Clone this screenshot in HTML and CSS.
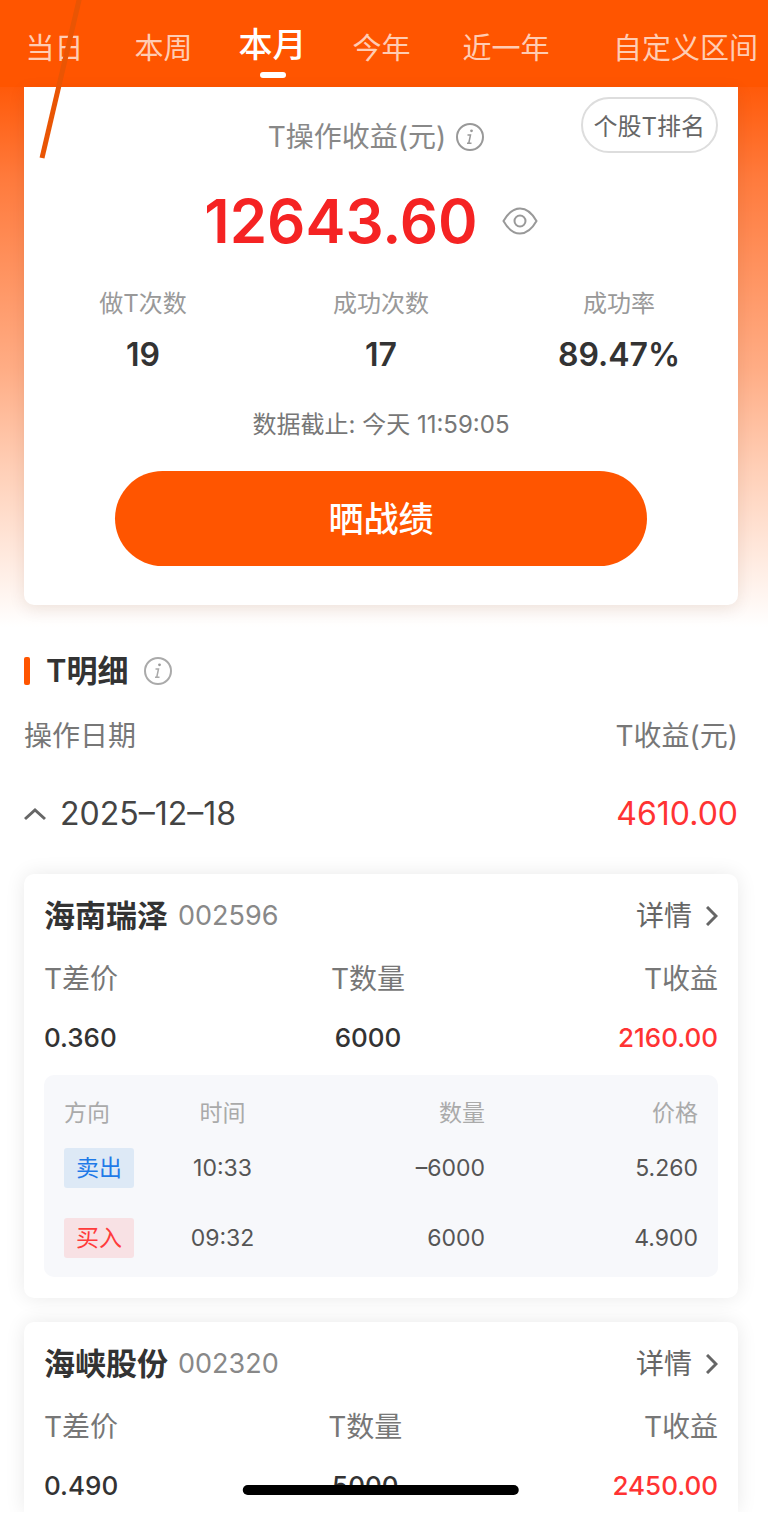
FILE: index.html
```html
<!DOCTYPE html>
<html lang="zh-CN">
  <head>
    <meta charset="UTF-8">
    <meta name="viewport" content="width=device-width, initial-scale=1.0">
    <title>T操作收益</title>
    <link rel="stylesheet" href="styles.css">
  </head>
  <body>
    <!-- Period tabs -->
    <nav class="tabs">
      <a href="#" class="tab">当日</a>
      <a href="#" class="tab">本周</a>
      <a href="#" class="tab active">本月</a>
      <a href="#" class="tab">今年</a>
      <a href="#" class="tab">近一年</a>
      <a href="#" class="tab custom">自定义区间</a>
    </nav>
    <svg class="slash" width="90" height="160" viewBox="0 0 90 160" aria-hidden="true">
      <path d="M80 -4 L42 158" fill="none" stroke="#e95504" stroke-width="5"/>
    </svg>

    <!-- Profit summary -->
    <section class="hero">
      <div class="summary">
        <button class="rank" type="button">个股T排名</button>
        <div class="summary-title">
          <span>T操作收益(元)</span>
          <svg class="info" viewBox="0 0 28 28" aria-hidden="true">
            <circle cx="14" cy="14" r="13"/>
            <path class="stem" d="M11.5 12 H14.5 L12.8 20 M11 20.3 H15.5"/>
            <circle class="dot" cx="15.5" cy="7.8" r="1.4"/>
          </svg>
        </div>
        <div class="amount">
          <span>12643.60</span>
          <svg class="eye" viewBox="0 0 36 28" aria-hidden="true">
            <path d="M1.5 14 C6 6 11 1.5 18 1.5 S30 6 34.5 14 C30 22 25 26.5 18 26.5 S6 22 1.5 14 Z"/>
            <circle cx="18" cy="14" r="5.5"/>
          </svg>
        </div>
        <div class="stats">
          <div class="stat"><span>做T次数</span><strong>19</strong></div>
          <div class="stat"><span>成功次数</span><strong>17</strong></div>
          <div class="stat"><span>成功率</span><strong>89.47%</strong></div>
        </div>
        <p class="deadline">数据截止: 今天 11:59:05</p>
        <button class="share" type="button">晒战绩</button>
      </div>
    </section>

    <!-- Trade details -->
    <main class="details">
      <h2 class="section-title">
        T明细
        <svg class="info light" viewBox="0 0 28 28" aria-hidden="true">
          <circle cx="14" cy="14" r="13"/>
          <path class="stem" d="M11.5 12 H14.5 L12.8 20 M11 20.3 H15.5"/>
          <circle class="dot" cx="15.5" cy="7.8" r="1.4"/>
        </svg>
      </h2>
      <div class="list-head"><span>操作日期</span><span>T收益(元)</span></div>
      <div class="day">
        <button class="toggle" type="button">
          <svg width="22" height="14" viewBox="0 0 22 14" aria-hidden="true"><path d="M1 12 L11 3 L21 12"/></svg>
          2025–12–18
        </button>
        <span class="day-profit">4610.00</span>
      </div>

      <article class="card">
        <header class="card-head">
          <h3>海南瑞泽</h3>
          <span class="code">002596</span>
          <a href="#" class="more">详情
            <svg width="12" height="20" viewBox="0 0 12 20" aria-hidden="true"><path d="M1 1 L10 10 L1 19"/></svg>
          </a>
        </header>
        <div class="figures">
          <div class="figure"><span>T差价</span><b>0.360</b></div>
          <div class="figure middle"><span>T数量</span><b>6000</b></div>
          <div class="figure right"><span>T收益</span><b class="up">2160.00</b></div>
        </div>
        <div class="trades">
          <table>
            <thead>
              <tr><th>方向</th><th>时间</th><th>数量</th><th>价格</th></tr>
            </thead>
            <tbody>
              <tr><td><span class="tag sell">卖出</span></td><td>10:33</td><td>–6000</td><td>5.260</td></tr>
              <tr><td><span class="tag buy">买入</span></td><td>09:32</td><td>6000</td><td>4.900</td></tr>
            </tbody>
          </table>
        </div>
      </article>

      <article class="card last">
        <header class="card-head">
          <h3>海峡股份</h3>
          <span class="code">002320</span>
          <a href="#" class="more">详情
            <svg width="12" height="20" viewBox="0 0 12 20" aria-hidden="true"><path d="M1 1 L10 10 L1 19"/></svg>
          </a>
        </header>
        <div class="figures">
          <div class="figure"><span>T差价</span><b>0.490</b></div>
          <div class="figure middle"><span>T数量</span><b>5000</b></div>
          <div class="figure right"><span>T收益</span><b class="up">2450.00</b></div>
        </div>
      </article>
    </main>

    <div class="home-bar"></div>
  </body>
</html>
```

FILE: styles.css
```css
/* General Styles */
* {
  box-sizing: border-box;
}

body {
  margin: 0;
  background: #fff;
  color: #333;
  font-family: Inter, "Noto Sans CJK SC", sans-serif;
  font-size: 28px;
  line-height: 40px;
  overflow-x: hidden;
}

a {
  color: inherit;
  text-decoration: none;
}

button {
  font-family: inherit;
  border: none;
  background: none;
  padding: 0;
  cursor: pointer;
}

h2,
h3,
p {
  margin: 0;
}

svg {
  fill: none;
  flex-shrink: 0;
}

/* Tabs */
.tabs {
  display: grid;
  grid-template-columns: repeat(4, 109fr) 140fr 192fr;
  height: 87px;
  padding-top: 21px;
  background: #ff5500;
  color: #ffccb3;
  font-size: 29px;
  line-height: 56px;
  text-align: center;
  white-space: nowrap;
}

.tab.active {
  color: #fff;
  font-size: 34px;
  font-weight: 500;
  line-height: 48px;
}

.tab.active::after {
  content: "";
  display: block;
  width: 26px;
  height: 6px;
  margin: 3px auto 0;
  border-radius: 3px;
  background: #fff;
}

.tab.custom {
  padding-right: 10px;
  text-align: right;
}

.slash {
  position: absolute;
  top: 0;
  left: 0;
  z-index: 2;
  pointer-events: none;
}

/* Summary */
.hero {
  padding: 0 30px 32px 24px;
  background: linear-gradient(#ff5a0a, #ff7a3c 90px, #ffac84 280px, #ffd0b8 385px, #fff 540px);
}

.summary {
  position: relative;
  padding: 30px 0 39px;
  border-radius: 0 0 10px 10px;
  background: #fff;
  box-shadow: 0 4px 16px rgba(80, 40, 0, 0.1);
  text-align: center;
}

.rank {
  position: absolute;
  top: 10px;
  right: 20px;
  height: 56px;
  padding: 0 11px 2px;
  border: 2px solid #ddd;
  border-radius: 28px;
  color: #666;
  font-size: 24px;
}

.summary-title {
  display: flex;
  align-items: center;
  justify-content: center;
  gap: 10px;
  padding-right: 10px;
  color: #888;
}

.info {
  width: 28px;
  height: 28px;
  stroke: #999;
  stroke-width: 2;
}

.info.light {
  stroke: #aaa;
}

.info .stem {
  stroke-width: 1.5;
}

.info .dot {
  fill: #999;
  stroke: none;
}

.amount {
  display: flex;
  align-items: center;
  justify-content: center;
  gap: 24px;
  margin-top: 24px;
  padding-right: 20px;
  color: #f52323;
  font-size: 60px;
  font-weight: 600;
  line-height: 80px;
}

.eye {
  width: 36px;
  height: 28px;
  stroke: #999;
  stroke-width: 2;
}

.stats {
  display: grid;
  grid-template-columns: repeat(3, 1fr);
  margin-top: 23px;
}

.stat span {
  display: block;
  color: #999;
  font-size: 24px;
}

.stat strong {
  display: block;
  margin-top: 11px;
  font-size: 32px;
  font-weight: 600;
}

.deadline {
  margin-top: 30px;
  color: #777;
  font-size: 24px;
}

.share {
  display: block;
  width: calc(100% - 182px);
  height: 95px;
  margin: 26px auto 0;
  padding-bottom: 4px;
  border-radius: 48px;
  background: #ff5500;
  color: #fff;
  font-size: 35px;
  font-weight: 500;
}

/* Details */
.details {
  padding: 0 30px 0 24px;
}

.section-title {
  display: flex;
  align-items: center;
  gap: 16px;
  margin-top: 14px;
  font-size: 31px;
  font-weight: 600;
}

.section-title::before {
  content: "";
  width: 6px;
  height: 28px;
  border-radius: 2px;
  background: #ff5500;
}

.list-head,
.day {
  display: flex;
  align-items: center;
  justify-content: space-between;
}

.list-head {
  margin-top: 25px;
  color: #777;
}

.day {
  margin: 38px 0 40px;
  font-size: 32px;
}

.toggle {
  display: flex;
  align-items: center;
  gap: 14px;
  color: #444;
  font-size: 32px;
  line-height: 40px;
}

.toggle svg {
  stroke: #666;
  stroke-width: 3;
}

.day-profit,
.up {
  color: #ff3333;
}

/* Stock cards */
.card {
  padding: 22px 20px 21px;
  border-radius: 10px;
  background: #fff;
  box-shadow: 0 0 20px rgba(0, 0, 0, 0.09);
}

.card + .card {
  margin-top: 24px;
}

.card.last {
  padding-bottom: 6px;
  border-radius: 10px 10px 0 0;
}

.card-head {
  display: flex;
  align-items: center;
}

.card-head h3 {
  font-size: 31px;
  font-weight: 600;
}

.code {
  margin-left: 10px;
  color: #888;
  font-size: 27px;
}

.more {
  display: flex;
  align-items: center;
  gap: 14px;
  margin-left: auto;
  color: #666;
}

.more svg {
  stroke: #666;
  stroke-width: 3;
}

.figures {
  display: flex;
  justify-content: space-between;
  margin-top: 23px;
}

.figure span {
  display: block;
  color: #777;
}

.figure b {
  display: block;
  margin-top: 19px;
  font-size: 26px;
  font-weight: 500;
}

.middle {
  text-align: center;
}

.right {
  text-align: right;
}

.trades {
  margin-top: 17px;
  padding: 18px 20px 4px;
  border-radius: 10px;
  background: #f7f8fb;
}

.trades table {
  width: 100%;
  table-layout: fixed;
  border-collapse: collapse;
  font-size: 23px;
  text-align: right;
}

.trades th,
.trades td {
  padding: 0;
}

.trades th {
  height: 40px;
  color: #aaa;
  font-weight: 400;
}

.trades td {
  height: 70px;
  color: #555;
}

.trades th:nth-child(1),
.trades td:nth-child(1) {
  width: 14%;
  text-align: left;
}

.trades th:nth-child(2),
.trades td:nth-child(2) {
  width: 22%;
  text-align: center;
}

.trades th:nth-child(4) {
  width: 213px;
}

.tag {
  display: inline-block;
  padding: 0 12px;
  border-radius: 3px;
}

.sell {
  background: #dde9f6;
  color: #1f7ae8;
}

.buy {
  background: #f8e1e4;
  color: #ff3b3b;
}

/* Home indicator */
.home-bar {
  position: fixed;
  bottom: 18px;
  left: calc(50% - 3px);
  width: 36%;
  height: 10px;
  border-radius: 5px;
  background: #000;
  transform: translateX(-50%);
}
```
